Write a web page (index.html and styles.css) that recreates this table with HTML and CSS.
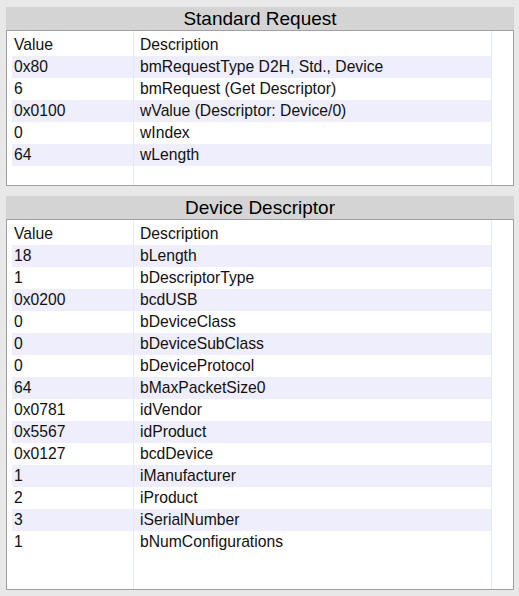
FILE: index.html
```html
<!DOCTYPE html>
<html>
<head>
<meta charset="utf-8">
<link rel="stylesheet" href="styles.css">
</head>
<body>
<div class="page">
  <section class="panel panel-request">
    <div class="panel-title">Standard Request</div>
    <div class="panel-box">
      <div class="col col-value">
        <div class="cell">Value</div>
        <div class="cell stripe">0x80</div>
        <div class="cell">6</div>
        <div class="cell stripe">0x0100</div>
        <div class="cell">0</div>
        <div class="cell stripe">64</div>
      </div>
      <div class="col col-desc">
        <div class="cell">Description</div>
        <div class="cell stripe">bmRequestType D2H, Std., Device</div>
        <div class="cell">bmRequest (Get Descriptor)</div>
        <div class="cell stripe">wValue (Descriptor: Device/0)</div>
        <div class="cell">wIndex</div>
        <div class="cell stripe">wLength</div>
      </div>
      <div class="col col-rest"></div>
    </div>
  </section>

  <section class="panel panel-device">
    <div class="panel-title">Device Descriptor</div>
    <div class="panel-box">
      <div class="col col-value">
        <div class="cell">Value</div>
        <div class="cell stripe">18</div>
        <div class="cell">1</div>
        <div class="cell stripe">0x0200</div>
        <div class="cell">0</div>
        <div class="cell stripe">0</div>
        <div class="cell">0</div>
        <div class="cell stripe">64</div>
        <div class="cell">0x0781</div>
        <div class="cell stripe">0x5567</div>
        <div class="cell">0x0127</div>
        <div class="cell stripe">1</div>
        <div class="cell">2</div>
        <div class="cell stripe">3</div>
        <div class="cell">1</div>
      </div>
      <div class="col col-desc">
        <div class="cell">Description</div>
        <div class="cell stripe">bLength</div>
        <div class="cell">bDescriptorType</div>
        <div class="cell stripe">bcdUSB</div>
        <div class="cell">bDeviceClass</div>
        <div class="cell stripe">bDeviceSubClass</div>
        <div class="cell">bDeviceProtocol</div>
        <div class="cell stripe">bMaxPacketSize0</div>
        <div class="cell">idVendor</div>
        <div class="cell stripe">idProduct</div>
        <div class="cell">bcdDevice</div>
        <div class="cell stripe">iManufacturer</div>
        <div class="cell">iProduct</div>
        <div class="cell stripe">iSerialNumber</div>
        <div class="cell">bNumConfigurations</div>
      </div>
      <div class="col col-rest"></div>
    </div>
  </section>
</div>
</body>
</html>
```

FILE: styles.css
```css
html, body {
  margin: 0;
  padding: 0;
  background: #e8e8e8;
}

body {
  font-family: "Liberation Sans", Arial, sans-serif;
  color: #000;
}

.page {
  display: flex;
  flex-direction: column;
  gap: 10px;
  padding: 7px 0 0 6px;
  width: 508px;
}

.panel {
  display: flex;
  flex-direction: column;
}

.panel-title {
  height: 23px;
  background: #d4d4d4;
  font-size: 19px;
  line-height: 23px;
  text-align: center;
}

.panel-box {
  display: flex;
  background: #fff;
  border: 1px solid #a0a0a0;
  padding-left: 5px;
}

.panel-request .panel-box {
  height: 154px;
}

.panel-device .panel-box {
  height: 369px;
}

.col {
  display: flex;
  flex-direction: column;
  padding-top: 3px;
  font-size: 15.7px;
  color: #111;
}

.col-value {
  width: 121px;
  border-right: 1px solid #e2ebf5;
}

.col-desc {
  width: 357px;
  border-right: 1px solid #e2ebf5;
}

.col-rest {
  flex: 1;
}

.cell {
  height: 22px;
  line-height: 22px;
  white-space: nowrap;
}

.col-value .cell {
  padding-left: 2px;
}

.col-desc .cell {
  padding-left: 6px;
}

.stripe {
  background: #eeeefc;
}
```
